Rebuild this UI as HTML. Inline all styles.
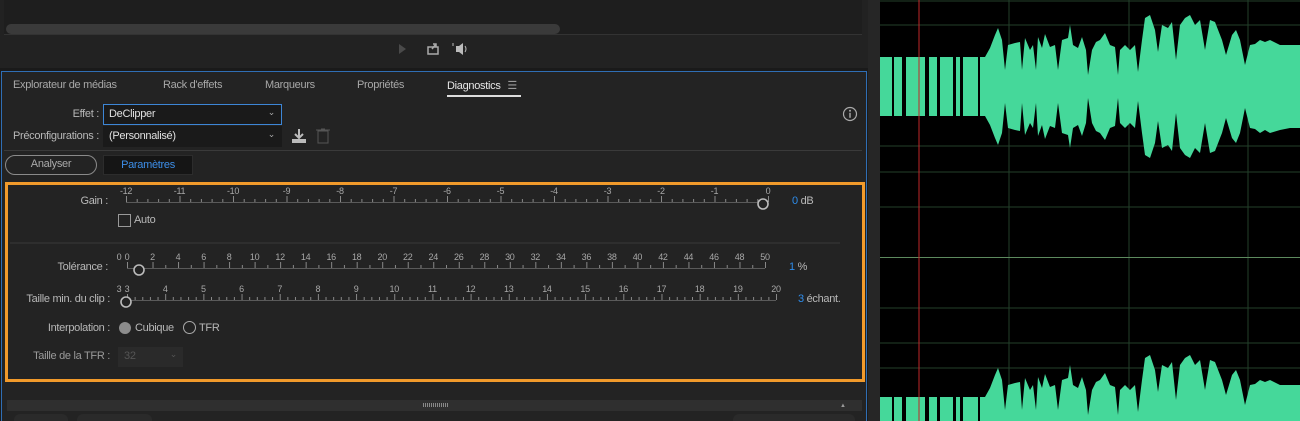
<!DOCTYPE html>
<html><head><meta charset="utf-8">
<style>
*{margin:0;padding:0;box-sizing:border-box}
html,body{width:1300px;height:421px;overflow:hidden}
body{background:#1a1a1a;position:relative;font-family:"Liberation Sans Narrow","Liberation Sans",sans-serif;font-size:11px;color:#b8b8b8;letter-spacing:-0.3px}
.a{position:absolute;white-space:nowrap}
.lbl{position:absolute;text-align:right;white-space:nowrap;font-size:11px;color:#b8b8b8}
.blue{color:#2d8ceb}
</style></head><body>
<div class="a" style="left:0;top:0;width:868px;height:68px;background:#222"></div>
<div class="a" style="left:4px;top:0;width:858px;height:35px;background:#1e1e1e;border-bottom:1px solid #333"></div>
<div class="a" style="left:6px;top:24px;width:554px;height:10px;background:#3a3a3a;border-radius:5px"></div>
<svg class="a" style="left:390px;top:40px" width="90" height="18">
<path d="M9 4 L16 9 L9 14Z" fill="#4a4a4a"/>
<rect x="38" y="7" width="10" height="7" fill="none" stroke="#aaa" stroke-width="1.5"/><path d="M42 9 L46 4 M43 4 H46 V7" stroke="#aaa" stroke-width="1.5" fill="none"/>
<path d="M66 6 H69 L73 3 V15 L69 12 H66Z" fill="#bbb"/><path d="M63 3 V6" stroke="#bbb"/><path d="M75 6 Q77 9 75 12" stroke="#bbb" fill="none"/>
</svg>
<div class="a" style="left:1px;top:71px;width:866px;height:350px;background:#232323;border:1px solid #2f6eb5;border-bottom:none"></div>
<div class="a" style="left:13px;top:79px;color:#a8a8a8">Explorateur de médias</div>
<div class="a" style="left:163px;top:79px;color:#a8a8a8">Rack d'effets</div>
<div class="a" style="left:265px;top:79px;color:#a8a8a8">Marqueurs</div>
<div class="a" style="left:357px;top:79px;color:#a8a8a8">Propriétés</div>
<div class="a" style="left:447px;top:79px;color:#e6e6e6">Diagnostics <span style="color:#999;margin-left:4px">☰</span></div>
<div class="a" style="left:447px;top:95px;width:74px;height:2px;background:#ddd"></div>
<div class="lbl" style="left:0;width:99px;top:108px">Effet :</div>
<div class="a" style="left:103px;top:104px;width:179px;height:21px;background:#1a1a1a;border:1px solid #3d86d6;color:#e0e0e0;padding:3px 5px">DeClipper<span style="position:absolute;right:6px;top:2px;color:#aaa;font-size:9px">⌄</span></div>
<div class="lbl" style="left:0;width:99px;top:130px">Préconfigurations :</div>
<div class="a" style="left:103px;top:126px;width:179px;height:21px;background:#1a1a1a;border:1px solid #1a1a1a;color:#e0e0e0;padding:3px 5px">(Personnalisé)<span style="position:absolute;right:6px;top:2px;color:#aaa;font-size:9px">⌄</span></div>
<svg class="a" style="left:290px;top:127px" width="42" height="18">
<path d="M9 2 V10 M5 7 L9 11 L13 7" stroke="#bbb" stroke-width="2" fill="none"/><rect x="2" y="12" width="14" height="4" fill="#bbb"/>
<rect x="28" y="4" width="10" height="12" fill="none" stroke="#555"/><path d="M26 3 H40 M31 2 H35" stroke="#555"/>
</svg>
<svg class="a" style="left:842px;top:106px" width="16" height="16"><circle cx="8" cy="8" r="6.5" fill="none" stroke="#aaa" stroke-width="1.2"/><circle cx="8" cy="4.8" r="1" fill="#aaa"/><rect x="7.3" y="6.8" width="1.4" height="5" fill="#aaa"/></svg>
<div class="a" style="left:4px;top:150px;width:858px;height:1px;background:#3a3a3a"></div>
<div class="a" style="left:5px;top:155px;width:92px;height:20px;border:1.5px solid #8a8a8a;border-radius:10px;text-align:center;line-height:17px;color:#aaa">Analyser</div>
<div class="a" style="left:103px;top:155px;width:90px;height:20px;background:#151515;border:1px solid #2c2c2c;text-align:center;line-height:18px;color:#3d8ee8">Paramètres</div>
<div class="a" style="left:5px;top:182px;width:860px;height:200px;border:3px solid #f19a2b"></div>
<div class="lbl" style="left:0;width:108px;top:195px">Gain :</div>
<svg class="a" style="left:110px;top:185px" width="680" height="26" id="g"></svg>
<div class="a" style="left:792px;top:195px"><span class="blue">0</span> dB</div>
<div class="a" style="left:118px;top:214px;width:13px;height:13px;border:1px solid #999"></div>
<div class="a" style="left:134px;top:214px">Auto</div>
<div class="a" style="left:10px;top:242px;width:830px;height:2px;background:#2e2e2e"></div>
<div class="lbl" style="left:0;width:108px;top:261px">Tolérance :</div>
<svg class="a" style="left:110px;top:251px" width="680" height="26" id="t"></svg>
<div class="a" style="left:789px;top:261px"><span class="blue">1</span> %</div>
<div class="lbl" style="left:0;width:110px;top:293px">Taille min. du clip :</div>
<svg class="a" style="left:110px;top:283px" width="680" height="26" id="c"></svg>
<div class="a" style="left:798px;top:293px"><span class="blue">3</span> échant.</div>
<div class="lbl" style="left:0;width:110px;top:322px">Interpolation :</div>
<div class="a" style="left:119px;top:322px;width:12px;height:12px;border-radius:50%;background:#8c8c8c"></div>
<div class="a" style="left:135px;top:322px">Cubique</div>
<div class="a" style="left:183px;top:321px;width:13px;height:13px;border-radius:50%;border:1.5px solid #aaa"></div>
<div class="a" style="left:199px;top:322px">TFR</div>
<div class="lbl" style="left:0;width:110px;top:350px;color:#9a9a9a">Taille de la TFR :</div>
<div class="a" style="left:118px;top:347px;width:65px;height:20px;background:#2a2a2a;color:#555;padding:3px 6px">32<span style="position:absolute;right:6px;top:2px;font-size:9px">⌄</span></div>
<div class="a" style="left:7px;top:400px;width:855px;height:11px;background:#2f2f2f"></div>
<div class="a" style="left:423px;top:403px;width:25px;height:4px;background:repeating-linear-gradient(90deg,#888 0 1px,transparent 1px 2px)"></div>
<div class="a" style="left:840px;top:403px;font-size:6px;color:#999">▲</div>
<div class="a" style="left:14px;top:414px;width:54px;height:7px;background:#2a2a2a;border-radius:6px 6px 0 0"></div>
<div class="a" style="left:77px;top:414px;width:75px;height:7px;background:#2a2a2a;border-radius:6px 6px 0 0"></div>
<div class="a" style="left:733px;top:414px;width:122px;height:7px;background:#2a2a2a;border-radius:6px 6px 0 0"></div>
<div class="a" style="left:868px;top:0;width:12px;height:421px;background:#262626"></div>
<svg class="a" style="left:880px;top:0" width="420" height="421">
<rect width="420" height="421" fill="#000"/>
<g stroke="#23402a" stroke-width="1">
<path d="M0 1H420M0 25H420M0 146H420M0 172H420M0 207H420M0 308H420M0 343H420M0 368H420M129 0V421M249 0V421M368 0V421"/>
</g>
<path d="M0 257.5H420" stroke="#5d8a5e" stroke-width="1"/>
<defs><path id="w" d="M0 57H105L110 48L115 35L118 28L122 40L125 70L128 45L135 43L140 42L142 70L145 38L150 50L153 45L156 70L158 37L162 48L165 34L170 47L175 45L178 70L182 40L188 38L190 25L193 45L198 48L202 37L206 50L208 75L212 50L216 42L220 40L225 33L230 45L235 47L238 75L240 50L245 45L250 50L255 45L258 72L262 40L265 18L270 15L275 30L278 52L282 25L288 28L292 22L296 60L300 25L305 18L310 15L315 25L320 20L325 50L330 20L335 22L342 40L346 55L352 35L356 30L360 40L365 65L370 45L375 44L380 40L385 42L390 40L400 45L410 45L420 45V128L410 128L400 130L390 133L385 130L380 133L375 129L370 128L365 108L360 133L356 143L352 138L346 118L342 133L335 151L330 153L325 123L320 153L315 148L310 158L305 155L300 148L296 113L292 151L288 145L282 148L278 121L275 143L270 158L265 155L262 133L258 101L255 128L250 123L245 128L240 123L238 98L235 126L230 128L225 140L220 133L216 131L212 123L208 98L206 123L202 136L198 125L193 128L190 148L188 135L182 133L178 103L175 128L170 126L165 139L162 125L158 136L156 103L153 128L150 123L145 135L142 103L140 131L135 130L128 128L125 103L122 133L118 145L115 138L110 125L105 116H0Z"/></defs>
<use href="#w" fill="#45d89a"/>
<g transform="translate(0 340)"><use href="#w" fill="#45d89a"/></g>
<g fill="#000"><rect x="12" y="55" width="2" height="62"/><rect x="22" y="55" width="4" height="62"/><rect x="45" y="55" width="4" height="62"/><rect x="57" y="55" width="3" height="62"/><rect x="73" y="55" width="3" height="62"/><rect x="80" y="55" width="3" height="62"/><rect x="98" y="55" width="2" height="62"/>
<rect x="12" y="395" width="2" height="26"/><rect x="22" y="395" width="4" height="26"/><rect x="45" y="395" width="4" height="26"/><rect x="57" y="395" width="3" height="26"/><rect x="73" y="395" width="3" height="26"/><rect x="80" y="395" width="3" height="26"/><rect x="98" y="395" width="2" height="26"/></g>
<path d="M39 0V421" stroke="#c0282a" stroke-width="1"/>
</svg>
<script>
function slider(id,x0,x1,labels,minor,knob,lead){
 var s=document.getElementById(id),h='',n=labels.length-1,step=(x1-x0)/n;
 h+='<line x1="'+(x0-110)+'" y1="17.5" x2="'+(x1-110)+'" y2="17.5" stroke="#5a5a5a"/>';
 for(var i=0;i<=n*minor;i++){var x=x0-110+i*step/minor+.5;var maj=i%minor==0;
  h+='<line x1="'+x+'" y1="'+(maj?11:14)+'" x2="'+x+'" y2="17" stroke="#888"/>';}
 for(var i=0;i<=n;i++){h+='<text x="'+(x0-110+i*step)+'" y="9" fill="#a8a8a8" font-size="9" text-anchor="middle" font-family="Liberation Sans Narrow,Liberation Sans,sans-serif">'+labels[i]+'</text>';}
 if(lead)h+='<text x="'+(lead-110)+'" y="9" fill="#a8a8a8" font-size="9" text-anchor="middle" font-family="Liberation Sans">'+labels[0]+'</text>';
 h+='<circle cx="'+(knob-110)+'" cy="19" r="5" fill="#232323" stroke="#bbb" stroke-width="1.6"/>';
 s.innerHTML=h;}
var g=[];for(var i=-12;i<=0;i++)g.push(i);
slider('g',126,768,g,5,763);
var t=[];for(var i=0;i<=50;i+=2)t.push(i);
slider('t',127,765,t,2,139,119);
var c=[];for(var i=3;i<=20;i++)c.push(i);
slider('c',127,776,c,5,126,119);
</script>
</body></html>
